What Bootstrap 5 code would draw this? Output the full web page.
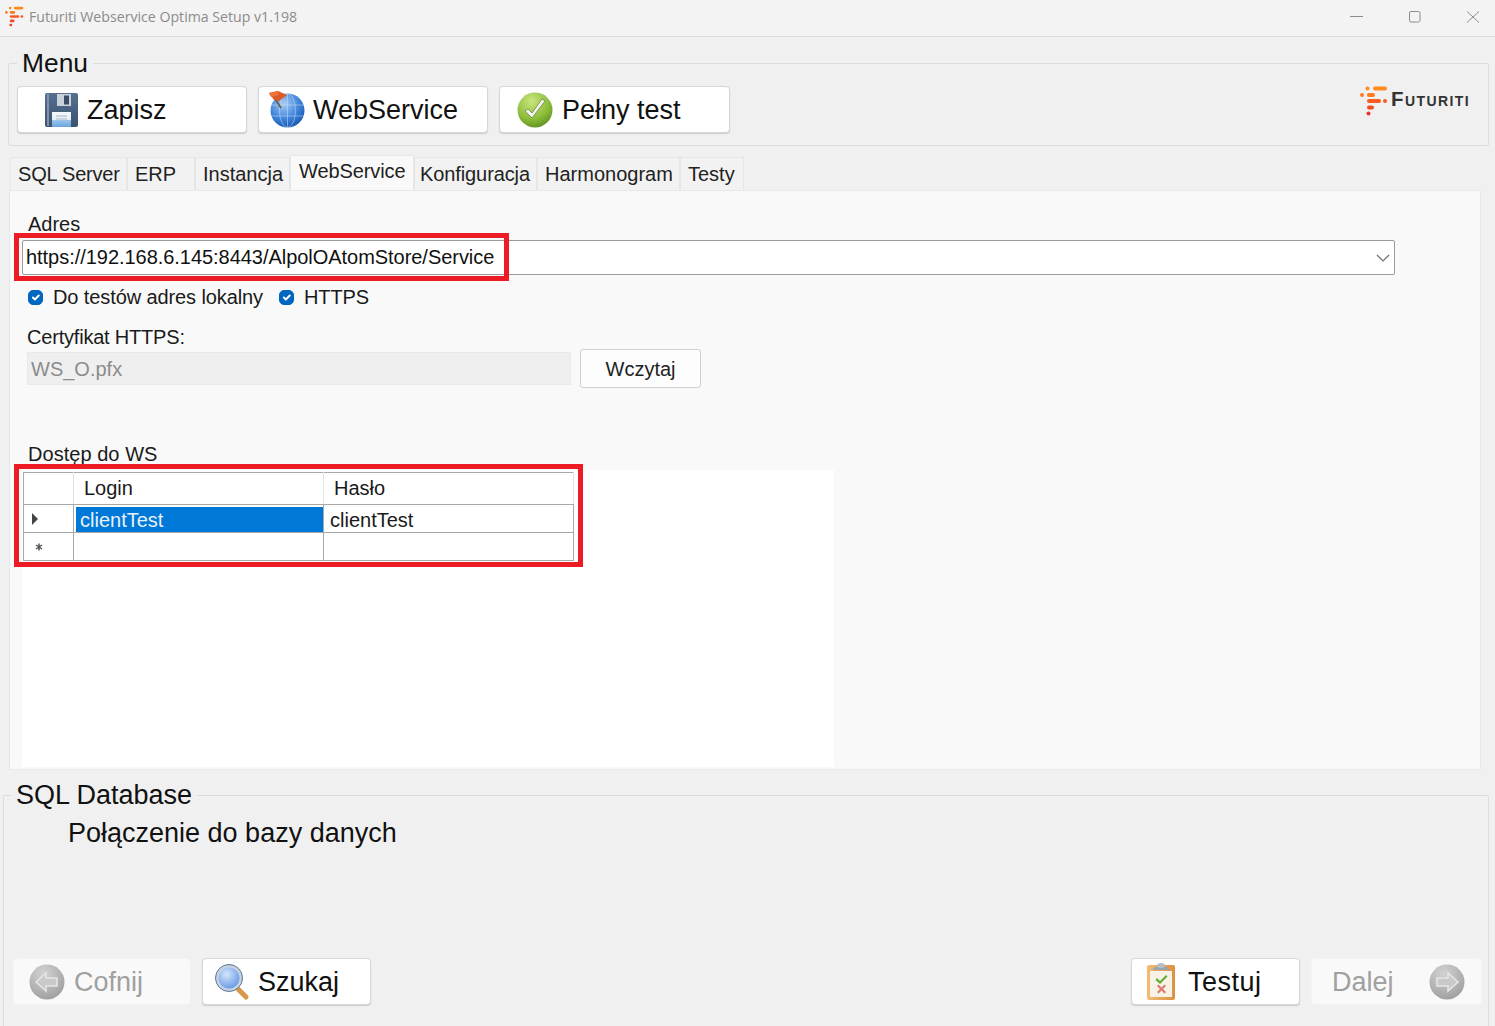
<!DOCTYPE html>
<html lang="pl">
<head>
<meta charset="utf-8">
<title>Futuriti Webservice Optima Setup v1.198</title>
<link href="https://cdn.jsdelivr.net/npm/bootstrap@5.3.0/dist/css/bootstrap.min.css" rel="stylesheet">
<style>
html,body{height:1026px;overflow:hidden}
body{background:#f0f0f0;font-family:"Liberation Sans",Arial,sans-serif;font-size:20px;line-height:24px;color:#1a1a1a}
.win-bar{height:37px;background:#f3f3f3;border-bottom:1px solid #d9d9d9;padding:0 0 3px 5px}
.win-title{font-family:"Open Sans",sans-serif;font-size:14.15px;color:#8b8b8b;margin-left:5px}
.win-ctl{padding-right:15px;gap:44px}
.frame{border:1px solid #dcdcdc;border-radius:2px;padding:0;min-width:0}
.frame legend{float:none;width:auto;margin:0;padding:0 5px;font-size:27px;line-height:30px;color:#111}
.frame-menu{margin:11px 6px 0 8px;padding:8px 8px 12px 8px}
.frame-menu legend{margin-left:0;font-size:26.4px}
.wbtn{display:inline-flex;align-items:center;height:47px;background:#fff;border:1px solid #d6d6d6;border-radius:4px;font-size:27px;line-height:30px;color:#111;padding:0;box-shadow:0 1px 1px #cccccc}
.wbtn svg{flex:none}
.wbtn-save{width:230px;padding-left:27px;gap:8px}
.wbtn-ws{width:230px;padding-left:9px;gap:8px}
.wbtn-full{width:231px;padding-left:17px;gap:9px}
.btn-row{gap:11px}
.logo-mark{margin-right:3px}
.logo-text{font-weight:700;font-size:20.5px;font-variant:small-caps;letter-spacing:1.4px;color:#333;line-height:1;padding:0 10px 0 0;margin-top:3px}
.tabs-bar{margin:10px 0 0 10px;height:34px;align-items:flex-end;border:0;flex-wrap:nowrap}
.tabs-bar .nav-link{height:33px;border:1px solid #e6e6e6;border-bottom:0;border-radius:0;background:#f2f2f2;color:#222;font-size:20px;line-height:32px;padding:0 0 0 7px;margin:0;white-space:nowrap}
.tabs-bar .nav-link.active{height:35px;background:#f9f9f9;color:#222;border-color:#e6e6e6;padding-left:8px;line-height:30px}
.tw1{width:117px;letter-spacing:-.2px}.tw2{width:68px}.tw3{width:95px}.tabs-bar .nav-link.tw4{width:124px;letter-spacing:-.1px}.tabs-bar .nav-link.tw5{width:123px;letter-spacing:-.1px;padding-left:5px}.tw6{width:143px}.tw7{width:64px}
.panel-main{margin:0 14px 0 9px;height:580px;background:#f9f9f9;border:1px solid #e8e8e8;padding:21px 0 0 12px}
.lbl{padding-left:6px}
.combo-wrap{width:1373px;margin-top:4px}
.combo{height:35px;border:1px solid #9a9a9a;border-radius:2px;background-color:#fff;font-size:20px;line-height:24px;letter-spacing:-.04px;color:#111;padding:0 24px 2px 3px;background-image:url("data:image/svg+xml,%3csvg xmlns='http://www.w3.org/2000/svg' viewBox='0 0 16 12'%3e%3cpath fill='none' stroke='%23707070' stroke-width='1.200' d='M2 3l6 6 6-6'/%3e%3c/svg%3e");background-position:right 3px center;background-size:16px 12px}
.red-a,.red-b{border:5px solid #ed1c24;pointer-events:none}
.red-a{left:-8px;top:-7px;width:495px;height:48px}
.red-b{left:-8px;top:-6px;width:569px;height:103px}
.chk-row{margin-top:10px;padding-left:6px;height:24px;letter-spacing:-.1px}
.chk{width:15px;height:15px;margin:0 10px 0 0;border-radius:3px;background-color:#0067c0;border-color:#0067c0;flex:none}
.chk:checked{background-color:#0067c0;border-color:#0067c0}
.chk-gap{margin-left:16px}
.cert-lbl{margin-top:16px;padding-left:5px;letter-spacing:-.2px}
.cert-row{padding-left:5px;gap:9px}
.cert-inp{width:544px;height:33px;background:#efefef;border:1px solid #e9e9e9;border-radius:0;font-size:20px;color:#8c8c8c;padding:2px 3px 0}
.cert-inp:disabled{background:#efefef;color:#8c8c8c;opacity:1}
.load-btn{width:121px;height:39px;background:#fdfdfd;border:1px solid #d0d0d0;border-radius:3px;font-size:20px;line-height:24px;color:#222;padding:0}
.ws-lbl{margin-top:54px;letter-spacing:.04px}
.grid-box{width:812px;height:297px;margin-top:4px;background:#fff}
.grid-tbl{table-layout:fixed;width:551px;font-size:20px;line-height:24px;border-collapse:collapse;--bs-table-bg:transparent}
.grid-tbl th,.grid-tbl td{border:1px solid #a8a8a8;padding:2px 6px 0;height:28px;font-weight:400;color:#1a1a1a;vertical-align:middle;overflow:hidden}
.grid-tbl th{height:32px;border-color:#a8a8a8 #e2e2e2 #a8a8a8 #a8a8a8;padding:0 6px 2px 10px}
.grid-tbl th:first-child{width:50px}
.grid-tbl th:nth-child(2){width:250px}
.grid-tbl td:first-child{padding:0 0 0 7px}
.grid-tbl td.sel{background:#0078d7;color:#e8f2fb;box-shadow:inset 2px 2px 0 #fff}
.grid-wrap{padding:2px 0 0 1px}
.row-mark{display:block}
.frame-sql{margin:10px 6px 0 3px;height:246px;padding:0;border-bottom:0;border-radius:2px 2px 0 0}
.frame-sql legend{margin-left:7px}
.sql-sub{font-size:27px;line-height:30px;color:#111;padding:8px 0 0 64px}
.foot{margin-top:110px;padding:0 6px 0 9px;justify-content:space-between}
.foot-l,.foot-r{gap:11px}
.wbtn-off{background:#f9f9f9;border-color:#f3f3f3;box-shadow:none;color:#a0a0a0}
.wbtn-off:disabled{background:#f9f9f9;border-color:#f3f3f3;color:#a0a0a0;opacity:1}
.wbtn-back{width:178px;padding-left:15px;gap:9px}
.wbtn-find{width:169px;padding-left:11px;gap:8px}
.wbtn-test{width:169px;padding-left:14px;gap:12px}
.wbtn-test span{letter-spacing:.5px}
.wbtn-next{width:171px;padding-left:20px;gap:35px}
</style>
</head>
<body>
<svg width="0" height="0" class="d-block">
 <defs>
  <symbol id="fmark" viewBox="0 0 28 30">
   <circle cx="7.500" cy="2.500" r="2" fill="#ff8a1e"/><rect x="13" y=".5" width="14" height="4" rx="2" fill="#ff8a1e"/>
   <circle cx="2" cy="9" r="2" fill="#ff7a1e"/><rect x="7" y="7" width="8" height="4" rx="2" fill="#ff7a1e"/>
   <rect x="7" y="13" width="14" height="4" rx="2" fill="#fb5a22"/><circle cx="25" cy="15" r="2" fill="#fb5a22"/>
   <rect x="7" y="19.500" width="7" height="4" rx="2" fill="#f44a25"/>
   <circle cx="8.500" cy="27.500" r="2" fill="#ee3526"/>
  </symbol>
  <radialGradient id="gGlobe" cx=".4" cy=".3" r=".8"><stop offset="0" stop-color="#a8cdf6"/><stop offset=".55" stop-color="#3f84db"/><stop offset="1" stop-color="#0f4fa8"/></radialGradient>
  <radialGradient id="gGreen" cx=".4" cy=".25" r=".85"><stop offset="0" stop-color="#c9e67f"/><stop offset=".6" stop-color="#8cbc3a"/><stop offset="1" stop-color="#55881d"/></radialGradient>
  <radialGradient id="gGrey" cx=".4" cy=".25" r=".85"><stop offset="0" stop-color="#d2d2d2"/><stop offset="1" stop-color="#9b9b9b"/></radialGradient>
  <radialGradient id="gLens" cx=".4" cy=".35" r=".7"><stop offset="0" stop-color="#d4e6fb"/><stop offset="1" stop-color="#5a90e0"/></radialGradient>
  <linearGradient id="gFlop" x1="0" y1="0" x2="0" y2="1"><stop offset="0" stop-color="#56708f"/><stop offset="1" stop-color="#3b5270"/></linearGradient>
  <linearGradient id="gLbl" x1="0" y1="0" x2="0" y2="1"><stop offset="0" stop-color="#f4f8fc"/><stop offset=".5" stop-color="#e6eff8"/><stop offset=".55" stop-color="#9cc4ea"/><stop offset="1" stop-color="#6aa5de"/></linearGradient>
  <linearGradient id="gBoard" x1="0" y1="0" x2="1" y2="0"><stop offset="0" stop-color="#f2bb78"/><stop offset="1" stop-color="#dc9140"/></linearGradient>
 </defs>
</svg>

<header class="win-bar d-flex align-items-center justify-content-between">
 <div class="d-flex align-items-center">
  <svg width="19" height="21" aria-hidden="true"><use href="#fmark"/></svg>
  <span class="win-title">Futuriti Webservice Optima Setup v1.198</span>
 </div>
 <div class="win-ctl d-flex align-items-center">
  <svg width="14" height="12" viewBox="0 0 14 12" aria-hidden="true"><path d="M0 5.500h13" stroke="#8c8c8c"/></svg>
  <svg width="14" height="12" viewBox="0 0 14 12" aria-hidden="true"><rect x="1.500" y=".5" width="10.500" height="10.500" rx="1.500" fill="none" stroke="#8c8c8c"/></svg>
  <svg width="14" height="12" viewBox="0 0 14 12" aria-hidden="true"><path d="M1 .5l12 11M13 .5l-12 11" stroke="#8c8c8c" fill="none"/></svg>
 </div>
</header>

<fieldset class="frame frame-menu">
 <legend>Menu</legend>
 <div class="d-flex justify-content-between">
  <div class="btn-row d-flex">
   <button class="wbtn wbtn-save" type="button">
    <svg width="34" height="34" viewBox="0 0 34 34" aria-hidden="true"><rect width="33" height="34" rx="2" fill="url(#gFlop)"/><path d="M3 1v32" stroke="#8093ab" stroke-width="2"/><rect x="12" y="1" width="14" height="12" fill="#c9d1db"/><rect x="19" y="2.500" width="5" height="9" fill="#3a4c66"/><rect x="7" y="19" width="19" height="15" fill="url(#gLbl)"/><path d="M11 23h11M11 26h11" stroke="#a7b5c6"/></svg>
    <span>Zapisz</span>
   </button>
   <button class="wbtn wbtn-ws" type="button">
    <svg width="37" height="37" viewBox="0 0 37 37" aria-hidden="true"><circle cx="19.500" cy="19.500" r="17" fill="url(#gGlobe)"/><g fill="none" stroke="#cfe2f8" stroke-opacity=".5"><ellipse cx="19.500" cy="19.500" rx="8" ry="17"/><path d="M19.500 2.500v34M3 14h33M3 25h33"/></g><path d="M4 3l9 14" stroke="#6b5a3a" stroke-width="1.600"/><path d="M1 2l9-2 9 4-8 6-5-1z" fill="#dc5a28"/><path d="M1 2l9-2 1 4-8 2z" fill="#ee7338"/></svg>
    <span>WebService</span>
   </button>
   <button class="wbtn wbtn-full" type="button">
    <svg width="36" height="36" viewBox="0 0 36 36" aria-hidden="true"><circle cx="18" cy="18" r="17.500" fill="url(#gGreen)"/><path d="M8 19l7 7L28 9l-3-2-10 14-4-4z" fill="#f4f4f4" stroke="#6b8a3a" stroke-width=".8"/></svg>
    <span>Pełny test</span>
   </button>
  </div>
  <div class="d-flex align-items-start">
   <svg class="logo-mark" width="28" height="30" aria-hidden="true"><use href="#fmark"/></svg>
   <span class="logo-text">Futuriti</span>
  </div>
 </div>
</fieldset>

<ul class="nav nav-tabs tabs-bar">
 <li class="nav-item"><a class="nav-link tw1" href="#">SQL Server</a></li>
 <li class="nav-item"><a class="nav-link tw2" href="#">ERP</a></li>
 <li class="nav-item"><a class="nav-link tw3" href="#">Instancja</a></li>
 <li class="nav-item"><a class="nav-link tw4 active" href="#">WebService</a></li>
 <li class="nav-item"><a class="nav-link tw5" href="#">Konfiguracja</a></li>
 <li class="nav-item"><a class="nav-link tw6" href="#">Harmonogram</a></li>
 <li class="nav-item"><a class="nav-link tw7" href="#">Testy</a></li>
</ul>

<main class="panel-main">
 <div class="lbl">Adres</div>
 <div class="combo-wrap position-relative">
  <select class="form-select combo" aria-label="Adres"><option>https://192.168.6.145:8443/AlpolOAtomStore/Service</option></select>
  <div class="red-a position-absolute"></div>
 </div>
 <div class="chk-row d-flex align-items-center">
  <input class="form-check-input chk" type="checkbox" checked id="c1"><label for="c1">Do testów adres lokalny</label>
  <input class="form-check-input chk chk-gap" type="checkbox" checked id="c2"><label for="c2">HTTPS</label>
 </div>
 <div class="cert-lbl">Certyfikat HTTPS:</div>
 <div class="cert-row d-flex align-items-center">
  <input class="form-control cert-inp" type="text" value="WS_O.pfx" disabled>
  <button class="btn load-btn" type="button">Wczytaj</button>
 </div>
 <div class="lbl ws-lbl">Dostęp do WS</div>
 <div class="grid-box grid-wrap position-relative">
  <table class="table grid-tbl mb-0">
   <thead><tr><th></th><th>Login</th><th>Hasło</th></tr></thead>
   <tbody>
    <tr><td><svg class="row-mark" width="8" height="12" viewBox="0 0 8 12" aria-hidden="true"><path d="M1 0l6 6-6 6z" fill="#444"/></svg></td><td class="sel">clientTest</td><td>clientTest</td></tr>
    <tr><td><svg class="row-mark ms-1" width="8" height="8" viewBox="0 0 8 8" aria-hidden="true"><path d="M4 .5v7M1 2l6 4M7 2L1 6" stroke="#555" stroke-width="1.500"/></svg></td><td></td><td></td></tr>
   </tbody>
  </table>
  <div class="red-b position-absolute"></div>
 </div>
</main>

<fieldset class="frame frame-sql">
 <legend>SQL Database</legend>
 <div class="sql-sub">Połączenie do bazy danych</div>
 <div class="foot d-flex">
  <div class="foot-l d-flex">
   <button class="wbtn wbtn-off wbtn-back" type="button" disabled>
    <svg width="36" height="36" viewBox="0 0 36 36" aria-hidden="true"><circle cx="18" cy="18" r="17.500" fill="url(#gGrey)"/><path d="M7 18l10-9v5h11v8H17v5z" fill="#c9c9c9" stroke="#e6e6e6" stroke-width="1.500"/></svg>
    <span>Cofnij</span>
   </button>
   <button class="wbtn wbtn-find" type="button">
    <svg width="36" height="38" viewBox="0 0 36 38" aria-hidden="true"><path d="M24 26l8 8" stroke="#d8974a" stroke-width="5" stroke-linecap="round"/><circle cx="15" cy="15" r="12" fill="url(#gLens)" stroke="#c4d2e2" stroke-width="3"/><circle cx="15" cy="15" r="13.500" fill="none" stroke="#5c7492"/></svg>
    <span>Szukaj</span>
   </button>
  </div>
  <div class="foot-r d-flex">
   <button class="wbtn wbtn-test" type="button">
    <svg width="30" height="38" viewBox="0 0 30 38" aria-hidden="true"><rect x="1" y="2" width="28" height="35" rx="2" fill="url(#gBoard)"/><rect x="4" y="8" width="22" height="26" fill="#f7f2e6"/><path d="M7 6a8 3 0 0 1 16 0v1H7z" fill="#9aa5ad"/><ellipse cx="15" cy="2.500" rx="4" ry="2.500" fill="#b7bfc5"/><path d="M11 15l3 3 6-6 1.500 1.500-7.500 7.500-4.500-4z" fill="#62ad34"/><path d="M11 23l3 3-3 3 1.500 1.500 3-3 3 3 1.500-1.500-3-3 3-3-1.500-1.500-3 3-3-3z" fill="#e0786e"/></svg>
    <span>Testuj</span>
   </button>
   <button class="wbtn wbtn-off wbtn-next" type="button" disabled>
    <span>Dalej</span>
    <svg width="36" height="36" viewBox="0 0 36 36" aria-hidden="true"><circle cx="18" cy="18" r="17.500" fill="url(#gGrey)"/><path d="M29 18l-10-9v5H8v8h11v5z" fill="#c9c9c9" stroke="#e6e6e6" stroke-width="1.500"/></svg>
   </button>
  </div>
 </div>
</fieldset>
</body>
</html>
